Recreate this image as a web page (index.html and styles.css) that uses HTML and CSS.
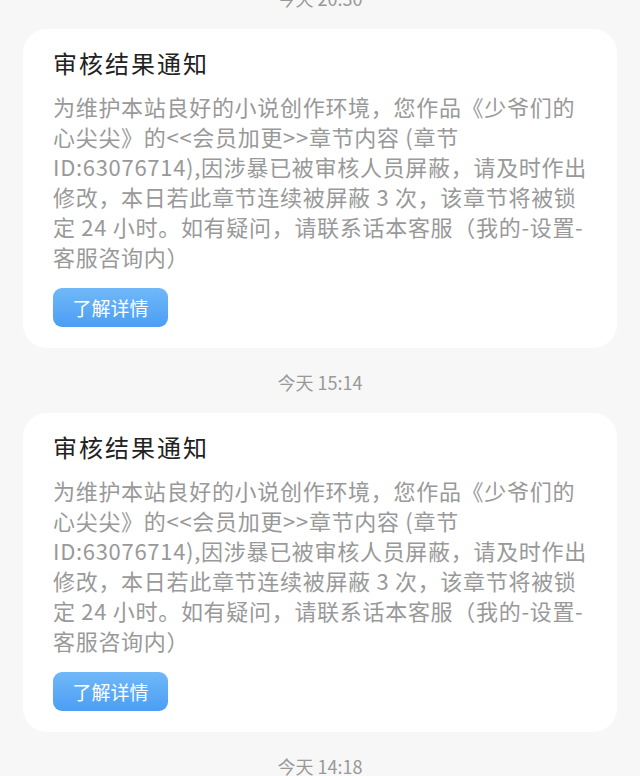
FILE: index.html
```html
<!DOCTYPE html>
<html lang="zh-CN">
<head>
    <meta charset="UTF-8">
    <meta name="viewport" content="width=device-width, initial-scale=1.0">
    <title>消息通知</title>
    <link rel="stylesheet" href="styles.css">
</head>
<body>
    <div class="message-list">
        <div class="time">今天 20:30</div>
        <div class="card">
            <div class="card-title">审核结果通知</div>
            <div class="card-text">为维护本站良好的小说创作环境，您作品《少爷们的<br>心尖尖》的&lt;&lt;会员加更&gt;&gt;章节内容 (章节<br>ID:63076714),因涉暴已被审核人员屏蔽，请及时作出<br>修改，本日若此章节连续被屏蔽 3 次，该章节将被锁<br>定 24 小时。如有疑问，请联系话本客服（我的-设置-<br>客服咨询内）</div>
            <button class="card-btn">了解详情</button>
        </div>

        <div class="time">今天 15:14</div>
        <div class="card">
            <div class="card-title">审核结果通知</div>
            <div class="card-text">为维护本站良好的小说创作环境，您作品《少爷们的<br>心尖尖》的&lt;&lt;会员加更&gt;&gt;章节内容 (章节<br>ID:63076714),因涉暴已被审核人员屏蔽，请及时作出<br>修改，本日若此章节连续被屏蔽 3 次，该章节将被锁<br>定 24 小时。如有疑问，请联系话本客服（我的-设置-<br>客服咨询内）</div>
            <button class="card-btn">了解详情</button>
        </div>

        <div class="time">今天 14:18</div>
    </div>
</body>
</html>
```

FILE: styles.css
```css
body {
    margin: 0;
    padding: 0;
    background: #f7f7f7;
    font-family: "Noto Sans CJK SC", "Noto Sans", sans-serif;
    overflow: hidden;
}
.message-list {
    margin-top: -36px;
    padding: 0 23px;
}
.time {
    padding: 24px 0 21px;
    line-height: 20px;
    font-size: 18px;
    color: #999;
    text-align: center;
}
.card {
    background: #ffffff;
    border-radius: 24px;
    padding: 17px 30px 21px;
}
.card-title {
    font-size: 24px;
    line-height: 34px;
    letter-spacing: 2px;
    color: #222;
    margin-bottom: 11px;
}
.card-text {
    font-size: 22px;
    line-height: 30px;
    letter-spacing: 0.7px;
    color: #999;
}
.card-btn {
    display: block;
    margin-top: 17px;
    width: 115px;
    height: 39px;
    border: none;
    border-radius: 9px;
    background: linear-gradient(180deg, #70b8f8, #4b9ef4);
    color: #fff;
    font-family: inherit;
    font-size: 19px;
    padding: 0;
}
```
